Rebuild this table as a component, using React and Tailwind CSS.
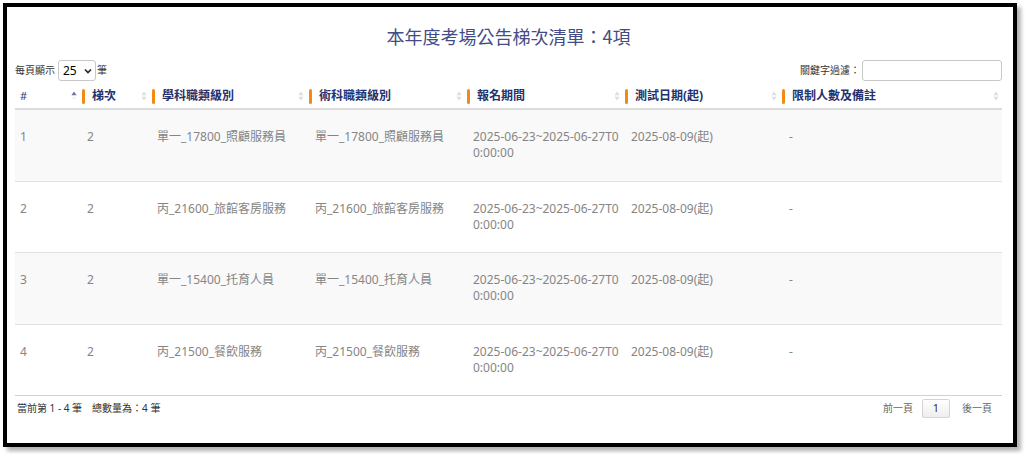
import React from "react";

const rows = [
  { no: 1, batch: 2, subject: "單一_17800_照顧服務員", skill: "單一_17800_照顧服務員" },
  { no: 2, batch: 2, subject: "丙_21600_旅館客房服務", skill: "丙_21600_旅館客房服務" },
  { no: 3, batch: 2, subject: "單一_15400_托育人員", skill: "單一_15400_托育人員" },
  { no: 4, batch: 2, subject: "丙_21500_餐飲服務", skill: "丙_21500_餐飲服務" },
];

const cols = "grid grid-cols-[65px_70px_157px_158px_158px_157px_222px]";

function SortIcon({ active }) {
  return (
    <svg width="6" height="10" viewBox="0 0 6 10" className="shrink-0">
      <path d="M3 0.5 L5.6 4.3 L0.4 4.3 Z" fill={active ? "#6b76a8" : "#dedede"} />
      <path d="M3 9.5 L5.6 5.7 L0.4 5.7 Z" fill={active ? "#f4f4f4" : "#dedede"} />
    </svg>
  );
}

function HeadCell({ label, first, active }) {
  return (
    <div className="flex items-center justify-between pr-[3px]">
      {first ? (
        <span className="pl-[5px] text-[11px] text-[#2c3a78]">{label}</span>
      ) : (
        <div className="flex items-center">
          <span className="ml-[2px] h-[15px] w-[3px] rounded-[2px] bg-[#f28a16]" />
          <span className="ml-[7px] font-bold text-[12px] text-[#25316d]">{label}</span>
        </div>
      )}
      <SortIcon active={active} />
    </div>
  );
}

export default function App() {
  return (
    <div className="w-[1027px] h-[454px] bg-white font-['Noto_Sans','Noto_Sans_CJK_TC',sans-serif]">
      <div className="ml-[3px] mt-[3px] w-[1014px] h-[444px] border-4 border-black bg-white shadow-[4px_4px_4px_rgba(0,0,0,0.3)]">
        <div className="pl-[8px] pr-[11px]">
          <h1 className="pt-[17px] h-[42px] text-center text-[18px] leading-[24px] font-normal text-[#434c86] font-['Noto_Sans_CJK_TC',sans-serif]">
            本年度考場公告梯次清單：4項
          </h1>

          <div className="mt-[11px] flex h-[21px] items-center justify-between text-[10px] text-[#333]">
            <div className="flex items-center">
              <span>每頁顯示</span>
              <div className="ml-[3px] flex h-[21px] w-[38px] items-center justify-between rounded-[3px] border border-[#c8c8c8] bg-white pl-[4px] pr-[3px] text-[12px] text-black">
                <span>25</span>
                <svg width="8" height="6" viewBox="0 0 8 6">
                  <path d="M1 1.5 L4 4.5 L7 1.5" stroke="#222" strokeWidth="1.6" fill="none" />
                </svg>
              </div>
              <span className="ml-[1px]">筆</span>
            </div>
            <div className="flex items-center">
              <span>關鍵字過濾：</span>
              <input className="ml-[2px] h-[21px] w-[140px] rounded-[3px] border border-[#c8c8c8] outline-none" />
            </div>
          </div>

          <div className={`${cols} mt-[3px] h-[26px] border-b-2 border-[#dcdcdc]`}>
            <HeadCell label="#" first active />
            <HeadCell label="梯次" />
            <HeadCell label="學科職類級別" />
            <HeadCell label="術科職類級別" />
            <HeadCell label="報名期間" />
            <HeadCell label="測試日期(起)" />
            <HeadCell label="限制人數及備註" />
          </div>

          {rows.map((r, i) => (
            <div
              key={r.no}
              className={`${cols} h-[71.5px] border-b border-[#e2e2e2] text-[12px] leading-[16px] text-[#858585] ${i % 2 === 0 ? "bg-[#f9f9f9]" : "bg-white"}`}
            >
              <div className="pl-[5px] pt-[19px]">{r.no}</div>
              <div className="pl-[7px] pt-[19px]">{r.batch}</div>
              <div className="pl-[7px] pt-[19px]">{r.subject}</div>
              <div className="pl-[8px] pt-[19px]">{r.skill}</div>
              <div className="pl-[8px] pt-[19px] break-all">2025-06-23~2025-06-27T00:00:00</div>
              <div className="pl-[8px] pt-[19px]">2025-08-09(起)</div>
              <div className="pl-[9px] pt-[19px]">-</div>
            </div>
          ))}

          <div className="flex h-[26px] items-center justify-between border-t border-[#d0d0d0] -mt-px">
            <span className="pl-[2px] text-[10px] text-[#333]">當前第 1 - 4 筆　總數量為：4 筆</span>
            <div className="flex items-center pr-[10px] text-[10px] text-[#666]">
              <span>前一頁</span>
              <span className="ml-[9px] flex h-[19px] w-[28px] items-center justify-center rounded-[2px] border border-[#d4d4d4] bg-gradient-to-b from-white to-[#eeeeee] text-[11px] text-[#333]">
                1
              </span>
              <span className="ml-[12px]">後一頁</span>
            </div>
          </div>
        </div>
      </div>
    </div>
  );
}
